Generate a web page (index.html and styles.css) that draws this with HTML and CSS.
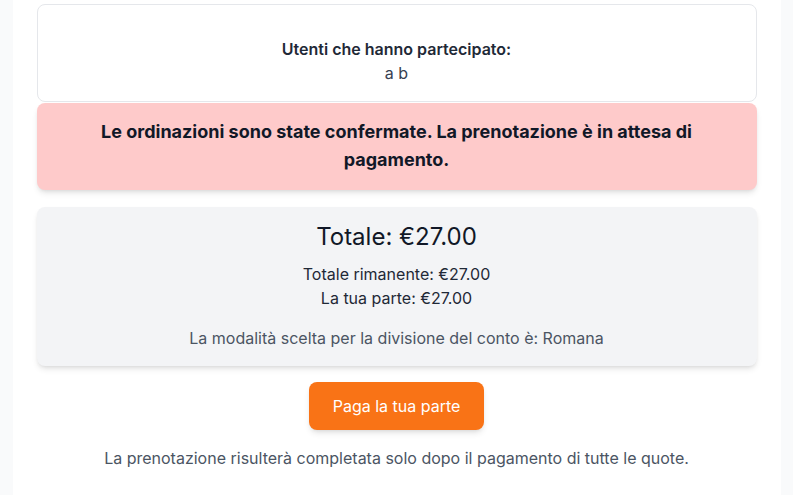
FILE: index.html
```html
<!DOCTYPE html>
<html lang="it">
<head>
<meta charset="utf-8">
<link rel="stylesheet" href="styles.css">
</head>
<body>
<main class="page">
  <section class="users-card">
    <p class="users-title">Utenti che hanno partecipato:</p>
    <p class="users-list">a b</p>
  </section>
  <div class="alert">
    <p>Le ordinazioni sono state confermate. La prenotazione è in attesa di pagamento.</p>
  </div>
  <section class="summary">
    <h2 class="total">Totale: €27.00</h2>
    <p class="line">Totale rimanente: €27.00</p>
    <p class="line">La tua parte: €27.00</p>
    <p class="mode">La modalità scelta per la divisione del conto è: Romana</p>
  </section>
  <div class="actions">
    <button class="pay-btn">Paga la tua parte</button>
  </div>
  <p class="note">La prenotazione risulterà completata solo dopo il pagamento di tutte le quote.</p>
</main>
</body>
</html>
```

FILE: styles.css
```css
* { box-sizing: border-box; }
html, body { margin: 0; padding: 0; }
body {
  background: #f9fafb;
  font-family: Inter, "Noto Sans", sans-serif;
  color: #1f2937;
  font-size: 16px;
  line-height: 24px;
}
p, h2 { margin: 0; }
.page {
  max-width: 768px;
  margin: 0 auto;
  background: #ffffff;
  min-height: 495px;
  padding: 4px 24px 24px;
}
.users-card {
  border: 1px solid #e5e7eb;
  border-radius: 8px;
  background: #fff;
  padding: 32px 16px 16px;
  text-align: center;
}
.users-title {
  font-weight: 600;
  font-size: 16px;
  color: #1f2937;
}
.users-list {
  font-size: 16px;
  color: #374151;
}
.alert {
  margin-top: 1px;
  background: #fecaca;
  border-radius: 8px;
  padding: 15px 40px 16px;
  text-align: center;
  box-shadow: 0 4px 6px -1px rgba(0,0,0,0.1), 0 2px 4px -2px rgba(0,0,0,0.1);
}
.alert p {
  font-size: 18px;
  line-height: 28px;
  font-weight: 700;
  color: #111827;
}
.summary {
  margin-top: 17px;
  background: #f3f4f6;
  border-radius: 8px;
  padding: 14px 16px 16px;
  text-align: center;
  box-shadow: 0 4px 6px -1px rgba(0,0,0,0.1), 0 2px 4px -2px rgba(0,0,0,0.1);
}
.total {
  font-size: 24px;
  line-height: 32px;
  font-weight: 400;
  color: #111827;
  margin-bottom: 9px;
}
.line {
  font-size: 16px;
  color: #1f2937;
}
.mode {
  margin-top: 16px;
  font-size: 16px;
  color: #4b5563;
}
.actions {
  margin-top: 16px;
  display: flex;
  justify-content: center;
}
.pay-btn {
  background: #f97316;
  color: #fff;
  border: none;
  border-radius: 8px;
  padding: 12px 24px;
  font-family: inherit;
  font-size: 16px;
  line-height: 24px;
  box-shadow: 0 4px 6px -1px rgba(0,0,0,0.1), 0 2px 4px -2px rgba(0,0,0,0.1);
}
.note {
  margin-top: 16px;
  text-align: center;
  font-size: 16px;
  color: #4b5563;
}
```
